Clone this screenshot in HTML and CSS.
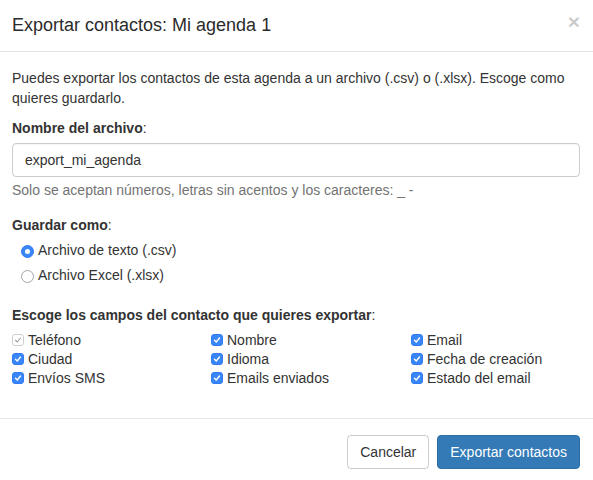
FILE: index.html
```html
<!DOCTYPE html>
<html lang="es">
<head>
<meta charset="utf-8">
<title>Exportar contactos</title>
<link rel="stylesheet" href="styles.css">
</head>
<body>
<div class="modal">
  <div class="modal-header">
    <h4 class="modal-title">Exportar contactos: Mi agenda 1</h4>
    <button class="close" type="button" aria-label="Cerrar">×</button>
  </div>
  <div class="modal-body">
    <p class="intro">Puedes exportar los contactos de esta agenda a un archivo (.csv) o (.xlsx). Escoge como quieres guardarlo.</p>

    <div class="form-group">
      <label class="control-label"><b>Nombre del archivo</b>:</label>
      <div class="form-control">export_mi_agenda</div>
      <div class="help-block">Solo se aceptan números, letras sin acentos y los caracteres: _ -</div>
    </div>

    <div class="form-group">
      <label class="control-label"><b>Guardar como</b>:</label>
      <div class="radios">
        <div class="radio"><span class="radio-box checked"></span><span>Archivo de texto (.csv)</span></div>
        <div class="radio"><span class="radio-box"></span><span>Archivo Excel (.xlsx)</span></div>
      </div>
    </div>

    <div class="form-group fields">
      <label class="control-label"><b>Escoge los campos del contacto que quieres exportar</b>:</label>
      <div class="field-grid">
        <div class="check"><span class="box disabled"><svg viewBox="0 0 12 12"><path d="M3 6.3 L5.1 8.4 L9 3.6"/></svg></span><span>Teléfono</span></div>
        <div class="check"><span class="box"><svg viewBox="0 0 12 12"><path d="M3 6.3 L5.1 8.4 L9 3.6"/></svg></span><span>Nombre</span></div>
        <div class="check"><span class="box"><svg viewBox="0 0 12 12"><path d="M3 6.3 L5.1 8.4 L9 3.6"/></svg></span><span>Email</span></div>
        <div class="check"><span class="box"><svg viewBox="0 0 12 12"><path d="M3 6.3 L5.1 8.4 L9 3.6"/></svg></span><span>Ciudad</span></div>
        <div class="check"><span class="box"><svg viewBox="0 0 12 12"><path d="M3 6.3 L5.1 8.4 L9 3.6"/></svg></span><span>Idioma</span></div>
        <div class="check"><span class="box"><svg viewBox="0 0 12 12"><path d="M3 6.3 L5.1 8.4 L9 3.6"/></svg></span><span>Fecha de creación</span></div>
        <div class="check"><span class="box"><svg viewBox="0 0 12 12"><path d="M3 6.3 L5.1 8.4 L9 3.6"/></svg></span><span>Envíos SMS</span></div>
        <div class="check"><span class="box"><svg viewBox="0 0 12 12"><path d="M3 6.3 L5.1 8.4 L9 3.6"/></svg></span><span>Emails enviados</span></div>
        <div class="check"><span class="box"><svg viewBox="0 0 12 12"><path d="M3 6.3 L5.1 8.4 L9 3.6"/></svg></span><span>Estado del email</span></div>
      </div>
    </div>
  </div>
  <div class="modal-footer">
    <button class="btn btn-default" type="button">Cancelar</button>
    <button class="btn btn-primary" type="button">Exportar contactos</button>
  </div>
</div>
</body>
</html>
```

FILE: styles.css
```css
* { box-sizing: border-box; }
html, body { margin: 0; padding: 0; background: #fff; }
body {
  font-family: "Liberation Sans", Arial, Helvetica, sans-serif;
  font-size: 14px;
  line-height: 20px;
  color: #333;
}
.modal { width: 593px; height: 480px; background: #fff; }

.modal-header {
  display: flex;
  justify-content: space-between;
  align-items: flex-start;
  padding: 15px 13px 16px 12px;
  border-bottom: 1px solid #e5e5e5;
}
.modal-title {
  margin: 0;
  font-size: 18px;
  line-height: 20px;
  font-weight: 500;
  color: #2b2b2b;
}
.close {
  margin: -4px 0 0 0;
  padding: 0;
  border: 0;
  background: transparent;
  font-family: "Liberation Sans", Arial, sans-serif;
  font-size: 21px;
  font-weight: 700;
  line-height: 21px;
  color: #000;
  opacity: 0.2;
  cursor: pointer;
}

.modal-body { padding: 16px 13px 31px 12px; }
.intro { margin: 0 0 10px; }

.form-group { margin-bottom: 15px; }
.form-group.fields { margin: 20px 0 0; }
.control-label { display: block; margin-bottom: 5px; }
.control-label b { font-weight: 700; }

.form-control {
  height: 34px;
  padding: 6px 12px;
  border: 1px solid #ccc;
  border-radius: 4px;
  color: #333;
  box-shadow: inset 0 1px 1px rgba(0,0,0,.04);
}
.help-block { margin-top: 3px; color: #737373; }

.radios { display: flex; flex-direction: column; gap: 5px; }
.radio { display: flex; align-items: center; padding-left: 9px; }
.radio-box {
  width: 13px; height: 13px;
  margin: 2px 4px 0 0;
  border-radius: 50%;
  border: 1px solid #a6a6a6;
  background: #fff;
  position: relative;
  flex: none;
}
.radio-box.checked {
  border-color: #2f7cf6;
  background: #3b86f7;
}
.radio-box.checked::after {
  content: "";
  position: absolute;
  left: 50%; top: 50%;
  width: 5px; height: 5px;
  margin: -2.5px 0 0 -2.5px;
  border-radius: 50%;
  background: #fff;
}

.field-grid {
  margin-top: 4px;
  display: grid;
  grid-template-columns: 199px 200px 1fr;
}
.check { display: flex; align-items: center; height: 19px; }
.box {
  width: 12px; height: 12px;
  margin-right: 4px;
  border-radius: 3px;
  background: #3b86f7;
  border: 1px solid #2f7cf6;
  display: flex; align-items: center; justify-content: center;
  flex: none;
}
.box svg { width: 12px; height: 12px; display: block; }
.box path { fill: none; stroke: #fff; stroke-width: 1.7; stroke-linecap: round; stroke-linejoin: round; }
.box.disabled { background: #fff; border-color: #cfcfcf; }
.box.disabled path { stroke: #9e9e9e; stroke-width: 1.3; }

.modal-footer {
  display: flex;
  justify-content: flex-end;
  gap: 8px;
  padding: 16px 13px 12px 12px;
  border-top: 1px solid #e5e5e5;
}
.btn {
  height: 34px;
  padding: 6px 12px;
  font-family: "Liberation Sans", Arial, sans-serif;
  font-size: 14px;
  line-height: 20px;
  border-radius: 4px;
  border: 1px solid transparent;
  cursor: pointer;
}
.btn-default { background: #fff; border-color: #ccc; color: #333; }
.btn-primary { background: #337ab7; border-color: #2e6da4; color: #fff; }
```
